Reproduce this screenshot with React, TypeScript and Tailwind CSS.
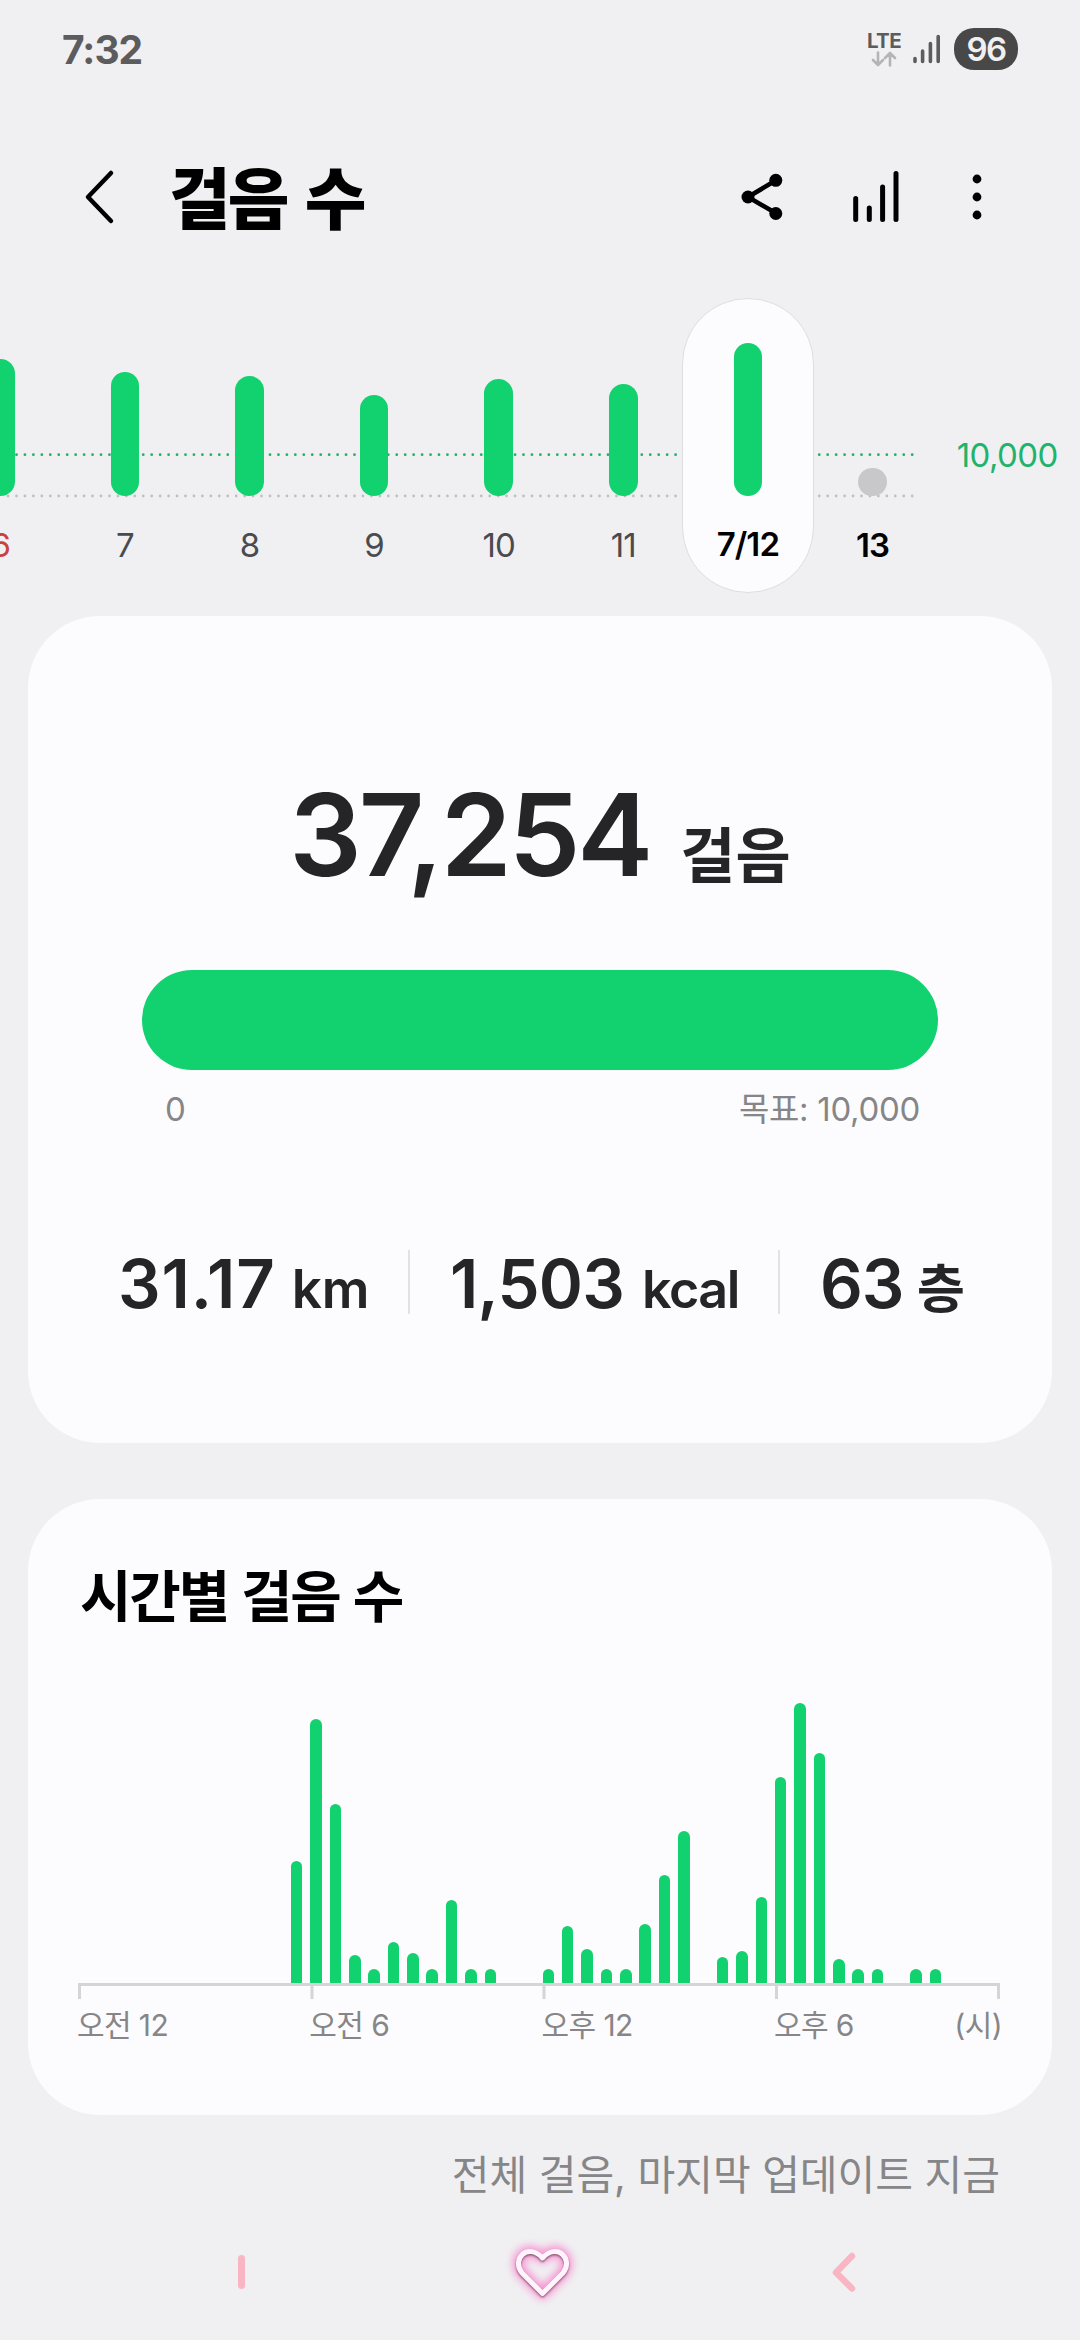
import React from 'react';

interface Day {
  label: string;
  height: number;
  tone: string;
  selected?: boolean;
}

const days: Day[] = [
  { label: '6', height: 137, tone: 'text-[#c8423f]' },
  { label: '7', height: 124, tone: 'text-[#4b4b4f]' },
  { label: '8', height: 120, tone: 'text-[#4b4b4f]' },
  { label: '9', height: 101, tone: 'text-[#4b4b4f]' },
  { label: '10', height: 117, tone: 'text-[#4b4b4f]' },
  { label: '11', height: 112, tone: 'text-[#4b4b4f]' },
  { label: '7/12', height: 153, tone: 'font-semibold text-black', selected: true },
  { label: '13', height: 0, tone: 'font-semibold text-black' },
];

// One value per half hour, starting at midnight
const halfHours = [
  0, 0, 0, 0, 0, 0, 0, 0, 0, 0, 0, 122, 264.5, 179.5, 28, 14, 41, 30.5, 14, 83, 14, 14, 0, 0,
  14, 57.5, 34, 14, 14, 59.5, 108, 152, 0, 26.5, 32.5, 86, 206.5, 280, 230.5, 24.5, 14, 14, 0, 14, 14, 0, 0, 0,
];

const StatusBar = () => (
  <div className="flex h-[98px] items-center justify-between px-[62px] text-[#5c5c5e]">
    <span className="text-[39px] font-bold leading-none tracking-[-1px]">7:32</span>
    <div className="flex items-center">
      <div className="flex w-[34px] flex-col items-center">
        <span className="text-[20.5px] font-bold leading-[18px] tracking-[-0.6px]">LTE</span>
        <svg className="mt-px h-4 w-[26px]" viewBox="0 0 26 16" fill="none" stroke="#b4b4b6" strokeWidth="2.6" strokeLinecap="round" strokeLinejoin="round">
          <path d="M7 1.5v12M2 9l5 5 5-5M19 14.5v-12M14 7l5-5 5 5" />
        </svg>
      </div>
      <svg className="ml-[11px] h-[30px] w-[30px]" viewBox="0 0 30 30" stroke="#5c5c5e" strokeWidth="3.6" strokeLinecap="round">
        <path d="M3 24.5v3M10.6 17v10.5M18.4 9.5v18M26.2 2.5v25" />
      </svg>
      <div className="ml-[12px] flex h-[42px] w-16 items-center justify-center rounded-[20px] bg-[#484848]">
        <span className="text-[33px] font-semibold leading-none tracking-[-1.5px] text-[#f0f0f2]">96</span>
      </div>
    </div>
  </div>
);

const Header = () => (
  <header className="flex h-[198px] items-center pl-[84px] pr-[97px]">
    <svg className="h-14 w-8" viewBox="0 0 32 56" fill="none" stroke="#000" strokeWidth="4.5" strokeLinecap="round" strokeLinejoin="round">
      <path d="M27 4L4 28l23 24" />
    </svg>
    <h1 className="ml-[53px] flex-1 whitespace-nowrap pt-1 text-[67px] font-black leading-none tracking-[-3px] text-black [word-spacing:8px]">걸음 수</h1>
    <svg className="h-12 w-12" viewBox="0 0 48 48">
      <path d="M38 7.3L10 24l28 16.3" fill="none" stroke="#000" strokeWidth="4.6" />
      <circle cx="10" cy="24" r="6.5" />
      <circle cx="37.8" cy="7.3" r="6.5" />
      <circle cx="37.8" cy="40.5" r="6.5" />
    </svg>
    <svg className="ml-[66px] h-14 w-[48px]" viewBox="0 0 48 56" stroke="#000" strokeWidth="5" strokeLinecap="round">
      <path d="M3.7 29.5v21M17.3 39v11.5M30.6 18v32.5M44 4.5v46" />
    </svg>
    <svg className="ml-[71px] h-12 w-3" viewBox="0 0 12 48">
      <circle cx="6" cy="6" r="4.4" />
      <circle cx="6" cy="24" r="4.4" />
      <circle cx="6" cy="42" r="4.4" />
    </svg>
  </header>
);

const WeekStrip = () => (
  <section className="relative h-[320px]">
    {/* Goal line and base line */}
    <svg className="absolute left-0 top-0 h-[220px] w-[920px]" viewBox="0 0 920 220" strokeWidth="2.8" strokeLinecap="round" strokeDasharray="0 8.45">
      <path d="M8.05 158.7H914" stroke="#22b065" />
      <path d="M8.05 200H914" stroke="#c0c0c3" />
    </svg>
    <div className="relative flex items-start">
      <div className="-ml-[62px] flex">
        {days.map((day) => (
          <div
            key={day.label}
            className={
              day.selected
                ? '-mx-[3.7px] mt-[2px] flex h-[295px] w-[132px] flex-col items-center rounded-[66px] border border-[#dedee0] bg-[#fcfcfe]'
                : 'flex w-[124.6px] flex-col items-center pt-[3px]'
            }
          >
            <div className="flex h-[197px] flex-col justify-end">
              {day.height > 0 ? (
                <div className="w-[28.5px] rounded-full bg-[#12d16f]" style={{ height: day.height }} />
              ) : (
                <div className="h-[28.5px] w-[28.5px] rounded-full bg-[#c8c8ca]" />
              )}
            </div>
            <span className={`${day.selected ? 'mt-[31px]' : 'mt-[32px]'} text-[33px] leading-[34px] tracking-[-0.9px] ${day.tone}`}>
              {day.label}
            </span>
          </div>
        ))}
      </div>
      <span className="ml-[22px] mt-[142px] text-[33px] leading-[34px] tracking-[-0.6px] text-[#1fb36c]">10,000</span>
    </div>
  </section>
);

const SummaryCard = () => (
  <section className="mx-7 h-[827px] rounded-[72px] bg-[#fcfcfe] text-[#252527]">
    <div className="flex h-[354px] items-end justify-center whitespace-nowrap">
      <span className="mb-[75px] text-[114px] font-semibold leading-[120px] tracking-[-3px]">37,254</span>
      <span className="mb-[78px] ml-[30px] text-[60px] font-bold leading-[72px]">걸음</span>
    </div>
    <div className="mx-[114px] h-[100px] rounded-[50px] bg-[#12d16f]" />
    <div className="mx-[132px] mt-[19px] flex justify-between text-[33px] leading-[40px] tracking-[-0.3px] text-[#868688]">
      <span className="pl-[5px]">0</span>
      <span>목표: 10,000</span>
    </div>
    <div className="mt-[117px] flex h-[72px] items-center whitespace-nowrap pl-[90px] font-semibold">
      <div className="flex w-[290px] items-baseline pt-[3px]">
        <span className="text-[67px] leading-[72px] tracking-[0.9px]">31.17</span>
        <span className="ml-[16px] text-[53px] leading-[60px] tracking-[-0.3px]">km</span>
      </div>
      <div className="h-16 w-0.5 bg-[#e2e2e5]" />
      <div className="flex w-[368px] items-baseline pl-[40px] pt-[3px]">
        <span className="text-[67px] leading-[72px] tracking-[-0.8px]">1,503</span>
        <span className="ml-[18px] text-[52px] leading-[60px] tracking-[-1.5px]">kcal</span>
      </div>
      <div className="h-16 w-0.5 bg-[#e2e2e5]" />
      <div className="flex items-baseline pl-[40px] pt-[3px]">
        <span className="text-[67px] leading-[72px] tracking-[-1.2px]">63</span>
        <span className="ml-[14px] text-[52px] font-bold leading-[60px]">층</span>
      </div>
    </div>
  </section>
);

const HourlyCard = () => (
  <section className="mx-7 mt-14 h-[616px] rounded-[72px] bg-[#fcfcfe] px-[50px] pt-[64px]">
    <h2 className="whitespace-nowrap pl-[2px] text-[56px] font-bold leading-[68px] tracking-[-2.2px] text-black [word-spacing:2px]">시간별 걸음 수</h2>
    <div className="mt-[52px] flex h-[300px] w-[922px] items-end justify-between">
      {halfHours.map((value, index) => (
        <div key={index} className="w-[11.5px] rounded-t-full bg-[#12d16f]" style={{ height: value }} />
      ))}
    </div>
    <svg className="block h-4 w-[922px]" viewBox="0 0 922 16" fill="none" stroke="#d5d5d8" strokeWidth="3">
      <path d="M1.5 16V1.5H920.5V16M234 1.5V16M466 1.5V16M698.5 1.5V16" />
    </svg>
    <div className="-ml-px mt-[8px] flex whitespace-nowrap text-[30px] leading-[36px] tracking-[-0.6px] text-[#868688]">
      <span className="w-[232.3px]">오전 12</span>
      <span className="w-[232.3px]">오전 6</span>
      <span className="w-[232.3px]">오후 12</span>
      <span className="flex-1">오후 6</span>
      <span>(시)</span>
    </div>
  </section>
);

const NavigationBar = () => (
  <nav className="flex h-[90px] items-center">
    <div className="ml-[238px] h-[34px] w-[7px] rounded-full bg-[#f9b6c2]" />
    <svg className="ml-[253px] h-[90px] w-[90px]" viewBox="0 0 90 90" fill="none" strokeLinejoin="round">
      <defs>
        <filter id="glow" x="-40%" y="-40%" width="180%" height="180%">
          <feGaussianBlur stdDeviation="4" />
        </filter>
        <filter id="shade" x="-40%" y="-40%" width="180%" height="180%">
          <feGaussianBlur stdDeviation="0.8" />
        </filter>
      </defs>
      <path d="M44.5 66.5L24 46C13 32 30 15 44.5 31C59 15 76 32 65 46Z" stroke="#f78fd0" strokeWidth="11" filter="url(#glow)" />
      <path d="M44.5 68L24 47.5C13 33.5 30 16.5 44.5 32.5C59 16.5 76 33.5 65 47.5Z" stroke="#7b4a68" strokeWidth="4.5" filter="url(#shade)" />
      <path d="M44.5 66.5L24 46C13 32 30 15 44.5 31C59 15 76 32 65 46Z" stroke="#fff4fb" strokeWidth="5" />
    </svg>
    <svg className="ml-[241px] h-11 w-8" viewBox="0 0 32 44" fill="none" stroke="#f9b6c2" strokeWidth="6.5" strokeLinecap="round" strokeLinejoin="round">
      <path d="M23 6L7 22.5l16 16" />
    </svg>
  </nav>
);

const App: React.FC = () => (
  <main className="h-[2340px] w-[1080px] overflow-hidden bg-[#f0f0f2] font-['Inter','Noto_Sans_CJK_KR',sans-serif]">
    <StatusBar />
    <Header />
    <WeekStrip />
    <SummaryCard />
    <HourlyCard />
    <p className="mt-[32px] whitespace-nowrap pr-[80px] text-right text-[41px] leading-[56px] text-[#868688]">
      전체 걸음, 마지막 업데이트 지금
    </p>
    <div className="mt-[24px]">
      <NavigationBar />
    </div>
  </main>
);

export default App;
